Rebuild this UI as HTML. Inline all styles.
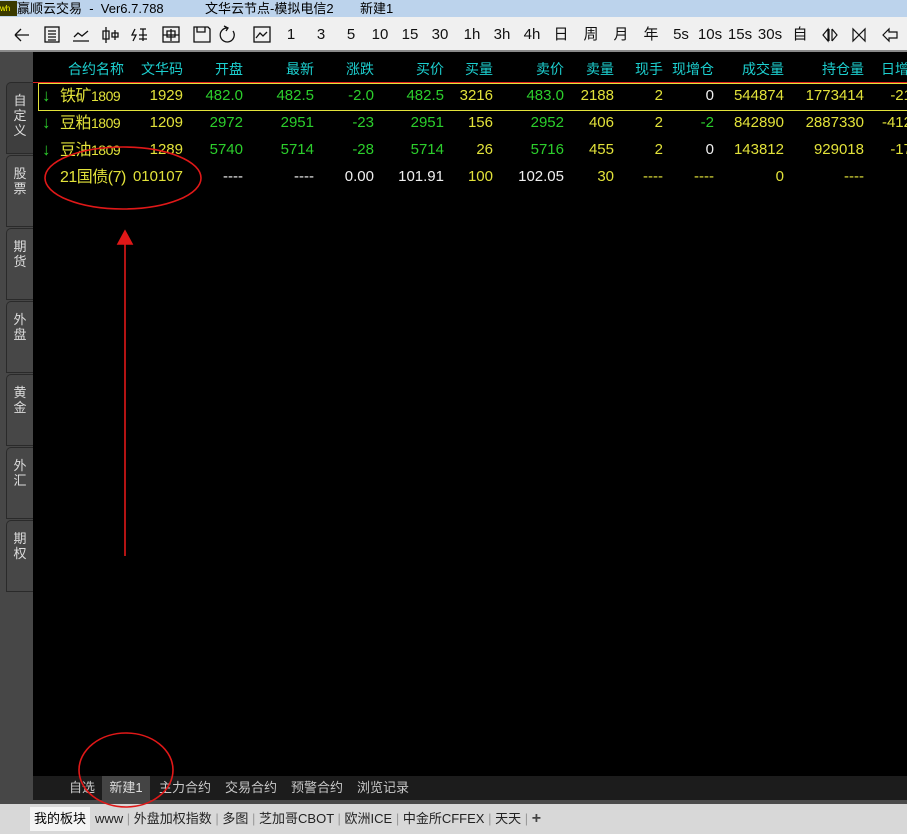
<!DOCTYPE html>
<html><head><meta charset="utf-8"><style>
*{margin:0;padding:0;box-sizing:border-box}
body{width:907px;height:834px;background:#000;position:relative;overflow:hidden;font-family:"Liberation Sans","Noto Sans CJK SC",sans-serif;}
.a{position:absolute;white-space:nowrap}
#title{left:0;top:0;width:907px;height:17px;background:#bcd3ec;font-size:13px;line-height:17px;color:#000}
#tool{left:0;top:17px;width:907px;height:35px;background:#f0f0f0;border-bottom:2px solid #8a8a8a}
.tb{position:absolute;top:8px;font-size:15px;color:#111;line-height:20px;transform:translateX(-50%)}
#side{left:0;top:52px;width:33px;height:748px;background:#474747}
.tab{position:absolute;left:6px;width:27px;height:72px;background:#474747;border:1px solid #2a2a2a;border-right:none;border-radius:5px 0 0 0;color:#ddd;font-size:13px;text-align:center;line-height:15px;padding-top:10px}
.hd{top:60px;font-size:14px;line-height:18px;color:#1ccfcf;text-align:right}
.c{font-size:15px;line-height:18px;text-align:right}
.y{color:#e2e23a}.g{color:#2ccf2c}.w{color:#f0f0f0}
#btabs{left:33px;top:776px;width:874px;height:24px;background:#1c1c1c;font-size:13px;color:#c8c8c8;line-height:24px}
#bbar{left:0;top:800px;width:907px;height:34px;background:#d8d8d8;border-top:4px solid #4a4a4a}
</style></head><body>
<div class="a" id="title"><span style="display:inline-block;width:17px;height:15px;background:#3a3a00;color:#ff0;font-size:8px;line-height:15px;vertical-align:top;margin-top:1px">wh</span>赢顺云交易 &nbsp;- &nbsp;Ver6.7.788<span style="position:absolute;left:205px">文华云节点-模拟电信2</span><span style="position:absolute;left:360px">新建1</span></div>
<div class="a" id="tool">
<svg class="a" style="left:0;top:0" width="280" height="35" fill="none" stroke="#111" stroke-width="1.3">
<path d="M15 18h14M15 18l6-6M15 18l6 6"/>
<rect x="45" y="10" width="14" height="15"/><path d="M48 14h8M48 17h8M48 20h8M48 23h8"/>
<path d="M73 24h16M74 20l4-4 4 3 6-5"/>
<path d="M106 10v16M103 14h6v8h-6zM115 13v10M112 16h6v4h-6z"/>
<path d="M135 12l-3 6h4l-3 6M140 12h6M143 12v12M139 18h8M139 22h8"/>
<rect x="163" y="10" width="16" height="15"/><path d="M167 14h8v6h-8zM171 12v12M163 18h16"/>
<path d="M194 10h14l2 2v13h-16zM197 10v5h8v-5"/>
<path d="M228 11a7 7 0 1 0 5 3M224 9l4 2-2 3"/>
<rect x="254" y="10" width="16" height="15"/><path d="M256 21l4-5 3 3 4-4"/>
</svg>
<span class="tb" style="left:291px">1</span><span class="tb" style="left:321px">3</span><span class="tb" style="left:351px">5</span><span class="tb" style="left:380px">10</span><span class="tb" style="left:410px">15</span><span class="tb" style="left:440px">30</span><span class="tb" style="left:472px">1h</span><span class="tb" style="left:502px">3h</span><span class="tb" style="left:532px">4h</span><span class="tb" style="left:561px">日</span><span class="tb" style="left:591px">周</span><span class="tb" style="left:621px">月</span><span class="tb" style="left:651px">年</span><span class="tb" style="left:681px">5s</span><span class="tb" style="left:710px">10s</span><span class="tb" style="left:740px">15s</span><span class="tb" style="left:770px">30s</span><span class="tb" style="left:800px">自</span>
<svg class="a" style="left:815px;top:0" width="92" height="35" fill="none" stroke="#111" stroke-width="1.2">
<path d="M8 18l5-6v12zM17 12v12M17 12l5 6-5 6M14 12v12"/>
<path d="M38 12v12l6-6zM50 12v12l-6-6z"/>
<path d="M68 18l6-6v3h8v6h-8v3z"/>
</svg>
</div>
<div class="a" id="side">
<div class="tab" style="top:30px;background:#3e3e3e">自<br>定<br>义</div>
<div class="tab" style="top:103px">股<br>票</div>
<div class="tab" style="top:176px">期<br>货</div>
<div class="tab" style="top:249px">外<br>盘</div>
<div class="tab" style="top:322px">黄<br>金</div>
<div class="tab" style="top:395px">外<br>汇</div>
<div class="tab" style="top:468px">期<br>权</div>
</div>
<div class="a hd" style="left:60px;width:64px">合约名称</div>
<div class="a hd" style="left:120px;width:63px">文华码</div>
<div class="a hd" style="left:180px;width:63px">开盘</div>
<div class="a hd" style="left:250px;width:64px">最新</div>
<div class="a hd" style="left:310px;width:64px">涨跌</div>
<div class="a hd" style="left:380px;width:64px">买价</div>
<div class="a hd" style="left:430px;width:63px">买量</div>
<div class="a hd" style="left:500px;width:64px">卖价</div>
<div class="a hd" style="left:550px;width:64px">卖量</div>
<div class="a hd" style="left:600px;width:63px">现手</div>
<div class="a hd" style="left:650px;width:64px">现增仓</div>
<div class="a hd" style="left:700px;width:84px">成交量</div>
<div class="a hd" style="left:780px;width:84px">持仓量</div>
<div class="a hd" style="left:881px;width:60px;text-align:left">日增仓</div>
<div class="a" style="left:33px;top:82px;width:874px;height:1px;background:#e02020"></div>
<div class="a" style="left:38px;top:83px;width:880px;height:28px;border:1px solid #e2e23a"></div>

<div id="rows"></div>
<script>
var R=[183,243,314,374,444,493,564,614,663,714,784,864,912];
var rows=[
[96,"铁矿","1809",[["1929","y"],["482.0","g"],["482.5","g"],["-2.0","g"],["482.5","g"],["3216","y"],["483.0","g"],["2188","y"],["2","y"],["0","w"],["544874","y"],["1773414","y"],["-21","y"]]],
[123,"豆粕","1809",[["1209","y"],["2972","g"],["2951","g"],["-23","g"],["2951","g"],["156","y"],["2952","g"],["406","y"],["2","y"],["-2","g"],["842890","y"],["2887330","y"],["-412","y"]]],
[150,"豆油","1809",[["1289","y"],["5740","g"],["5714","g"],["-28","g"],["5714","g"],["26","y"],["5716","g"],["455","y"],["2","y"],["0","w"],["143812","y"],["929018","y"],["-17","y"]]],
[177,"21国债(7)","",[["010107","y"],["----","w"],["----","w"],["0.00","w"],["101.91","w"],["100","y"],["102.05","w"],["30","y"],["----","y"],["----","y"],["0","y"],["----","y"],["-","y"]]]
];
var h="";
rows.forEach(function(r,i){
 var t=r[0]-9;
 if(i<3) h+='<div class="a g" style="left:42px;top:'+(t-1)+'px;font-size:17px;line-height:20px;font-weight:bold">↓</div>';
 h+='<div class="a y" style="left:60px;top:'+(t-1)+'px;font-size:16px;line-height:20px;letter-spacing:-0.5px">'+r[1]+'<span style="font-size:14px">'+r[2]+'</span></div>';
 r[3].forEach(function(c,j){
  var right=R[j];
  h+='<div class="a c '+c[1]+'" style="left:'+(right-80)+'px;width:80px;top:'+t+'px">'+c[0]+'</div>';
 });
});
document.getElementById("rows").innerHTML=h;
</script>

<div class="a" id="btabs">
<span class="a" style="left:36px">自选</span>
<span class="a" style="left:69px;width:48px;background:#444;text-align:center;color:#ddd">新建1</span>
<span class="a" style="left:126px">主力合约</span>
<span class="a" style="left:192px">交易合约</span>
<span class="a" style="left:258px">预警合约</span>
<span class="a" style="left:324px">浏览记录</span>
</div>
<div class="a" id="bbar">
<span class="a" style="left:30px;top:3px;width:60px;height:24px;background:#f4f4f4;font-size:13px;line-height:24px;text-align:center">我的板块</span>
<span class="a" style="left:95px;top:3px;font-size:13px;line-height:24px;color:#222">www <span style="color:#999">|</span> 外盘加权指数 <span style="color:#999">|</span> 多图 <span style="color:#999">|</span> 芝加哥CBOT <span style="color:#999">|</span> 欧洲ICE <span style="color:#999">|</span> 中金所CFFEX <span style="color:#999">|</span> 天天 <span style="color:#999">|</span> <b style="font-size:16px;color:#444">+</b></span>
</div>

<svg class="a" style="left:0;top:0" width="907" height="834" fill="none" stroke="#e01818" stroke-width="1.6">
<ellipse cx="123" cy="178" rx="78" ry="31"/>
<ellipse cx="126" cy="770" rx="47" ry="37"/>
<path d="M125 556L125 240"/>
<path d="M118 244L125 231L132 244Z" fill="#e01818"/>
</svg>
</body></html>
